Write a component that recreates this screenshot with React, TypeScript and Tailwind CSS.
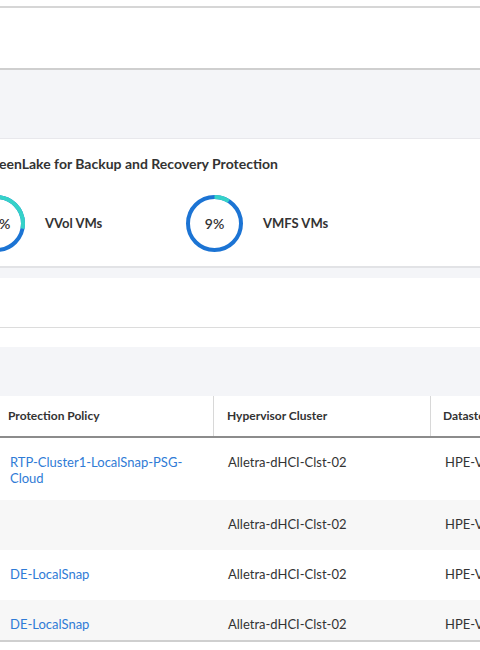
import React from 'react';

const font = { fontFamily: 'Lato, "Noto Sans", "Liberation Sans", sans-serif' };

function Ring({ pct }: { pct: number }) {
  const r = 26.5;
  const c = 2 * Math.PI * r;
  const teal = (pct / 100) * c;
  return (
    <div className="relative w-[57px] h-[57px] shrink-0">
      <svg width="57" height="57" viewBox="0 0 57 57" className="-rotate-90">
        <circle cx="28.5" cy="28.5" r={r} fill="none" stroke="#1c74d4" strokeWidth="4" />
        <circle
          cx="28.5"
          cy="28.5"
          r={r}
          fill="none"
          stroke="#35d2c8"
          strokeWidth="4"
          strokeDasharray={`${teal} ${c}`}
        />
      </svg>
      <div className="absolute inset-0 flex items-center justify-center text-[14px] font-semibold text-[#333]">
        {pct}%
      </div>
    </div>
  );
}

const rows = [
  { policy: ['RTP-Cluster1-LocalSnap-PSG-', 'Cloud'], cluster: 'Alletra-dHCI-Clst-02', ds: 'HPE-VVol-DS01', h: 'h-[62px]', bg: 'bg-white' },
  { policy: [], cluster: 'Alletra-dHCI-Clst-02', ds: 'HPE-VVol-DS01', h: 'h-[50px]', bg: 'bg-[#f7f7f7]' },
  { policy: ['DE-LocalSnap'], cluster: 'Alletra-dHCI-Clst-02', ds: 'HPE-VVol-DS02', h: 'h-[50px]', bg: 'bg-white' },
  { policy: ['DE-LocalSnap'], cluster: 'Alletra-dHCI-Clst-02', ds: 'HPE-VVol-DS02', h: 'h-[40px]', bg: 'bg-[#f7f7f7]' },
];

export default function App() {
  return (
    <div className="w-[480px] h-[650px] overflow-hidden bg-white text-[#333]" style={font}>
      <div className="h-[6px] bg-white" />
      <div className="h-[62px] bg-white border-t-2 border-[#d6d6d6]" />
      <div className="h-[70px] bg-[#f4f5f8] border-t-2 border-[#cfcfcf]" />

      <div className="h-[130px] bg-white border-t border-[#e8e8ec] border-b-2 border-b-[#e2e3e6] overflow-hidden">
        <div className="-ml-[47px] pt-[17px]">
          <div className="text-[14px] font-bold leading-[16px] whitespace-nowrap text-[#333]">
            HPE GreenLake for Backup and Recovery Protection
          </div>
          <div className="flex pl-[15px] mt-[23px]">
            <div className="w-[218px] flex items-center gap-[20px]">
              <Ring pct={28} />
              <span className="text-[13px] font-bold whitespace-nowrap">VVol VMs</span>
            </div>
            <div className="w-[218px] flex items-center gap-[20px]">
              <Ring pct={9} />
              <span className="text-[13px] font-bold whitespace-nowrap">VMFS VMs</span>
            </div>
          </div>
        </div>
      </div>

      <div className="h-[10px] bg-[#f4f5f8]" />
      <div className="h-[50px] bg-white border-b border-[#dcdcdc]" />
      <div className="h-[19px] bg-white" />
      <div className="h-[49px] bg-[#f4f5f8]" />

      <div className="w-[560px]">
        <div className="flex h-[42px] bg-white border-b-2 border-[#8c8c8c] text-[12px] font-bold">
          <div className="w-[213px] flex items-center pl-[8px]">Protection Policy</div>
          <div className="w-[217px] flex items-center pl-[13px] border-l border-[#d8d8d8]">Hypervisor Cluster</div>
          <div className="flex-1 flex items-center pl-[12px] border-l border-[#d8d8d8]">Datastore</div>
        </div>
        {rows.map((r, i) => (
          <div key={i} className={`flex ${r.h} ${r.bg} text-[13px] leading-[16px] pt-[16px]`}>
            <div className="w-[213px] pl-[10px] pr-[8px] text-[#2f7bd6]">
              {r.policy.map((p, j) => (
                <div key={j} className="whitespace-nowrap">{p}</div>
              ))}
            </div>
            <div className="w-[217px] pl-[15px] whitespace-nowrap">{r.cluster}</div>
            <div className="flex-1 pl-[15px] whitespace-nowrap">{r.ds}</div>
          </div>
        ))}
        <div className="border-t-2 border-[#cfcfcf]" />
      </div>
    </div>
  );
}
